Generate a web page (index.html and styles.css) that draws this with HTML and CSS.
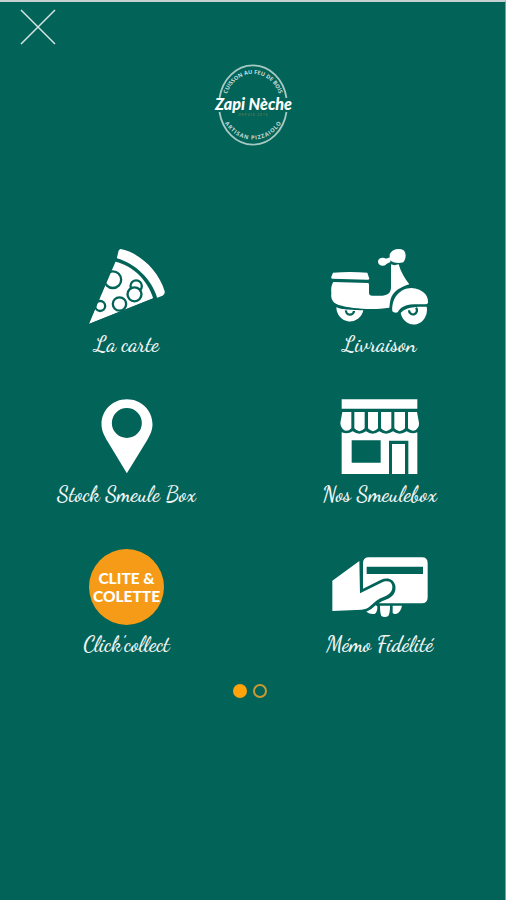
FILE: index.html
```
<!DOCTYPE html>
<html lang="fr">
	<head>
		<meta charset="utf-8">
		<title>Zapi Nèche</title>
		<link rel="stylesheet" href="styles.css">
	</head>
	<body>
		<div class="menu">
			<a class="close" href="javascript:;">
				<svg viewBox="0 0 36 36"><path d="M1 1L35 35M35 1L1 35"/></svg>
			</a>
			<div class="logo">
				<svg viewBox="0 0 84 84">
					<defs>
						<path id="arc-top" d="M14 42A28 31 0 0 1 70 42"/>
						<path id="arc-bottom" d="M9 42A33 34.5 0 0 0 75 42"/>
					</defs>
					<path class="ring" d="M8.5 35A34 39.3 0 0 1 75.5 35M8.5 49A34 39.3 0 0 0 75.5 49"/>
					<text class="around"><textPath href="#arc-top" startOffset="50%" text-anchor="middle" textLength="70">CUISSON AU FEU DE BOIS</textPath></text>
					<text class="around"><textPath href="#arc-bottom" startOffset="50%" text-anchor="middle" textLength="68">ARTISAN PIZZAIOLO</textPath></text>
					<text class="brand" x="4" y="47" textLength="77" lengthAdjust="spacingAndGlyphs">Zapi Nèche</text>
					<text class="since" x="42" y="52.5" text-anchor="middle" textLength="29">DEPUIS 2015</text>
				</svg>
			</div>
			<ul class="list">
				<li><a href="javascript:;">
					<svg class="icon" viewBox="4.5 27 300 228">
						<path d="M135 27C193 38 250 93 268 155Q268 164 261 167L245 173C228 117 180 71 124 55L129 33Q131 28 135 27Z"/>
						<path d="M120 65C171 77 216 119 233 175L40 252Z"/>
						<g class="cut">
							<circle cx="112" cy="119" r="25"/>
							<circle cx="182" cy="138" r="17"/>
							<circle class="solid" cx="177" cy="163" r="21"/>
							<circle cx="132" cy="192" r="20"/>
							<circle cx="74" cy="198" r="15"/>
						</g>
						<path class="hide" d="M118 60L40 252L26 246L94 62ZM40 252L236 174L238 186L46 266Z"/>
					</svg>
					<span>La carte</span>
				</a></li>
				<li><a href="javascript:;">
					<svg class="icon" viewBox="30 27 300 228">
						<path d="M39 98Q90 94 142 98L148 116Q148 119 143 119L37 116Q32 116 34 110Z"/>
						<path d="M40 126L144 129Q147 130 147 134V158Q147 167 157 167H188C205 166 213 157 213 142V73Q222 78 236 73C243 97 254 116 268 133C243 140 219 154 212 177Q209 190 208 203C158 211 93 206 56 195C37 188 32 177 34 159Q32 137 40 126Z"/>
						<path d="M209 43C216 27 237 23 251 31C260 41 258 57 250 67C235 72 218 68 209 60Z"/>
						<ellipse cx="188" cy="65" rx="14" ry="12"/>
						<path d="M197 56L211 52V66L199 72Z"/>
						<path d="M217 214C214 173 240 145 274 144C307 147 326 164 324 188Q323 193 315 193H281C254 193 240 204 233 217Q224 221 217 214Z"/>
						<path d="M49 202C64 208 76 209 130 211A41 43 0 0 1 49 202Z"/>
						<path d="M242 219C252 207 267 199 320 200A39 43 0 0 1 242 219Z"/>
						<path class="hub" d="M78 211A12 12 0 0 0 102 213M267 211A12 12 0 1 0 288 203"/>
					</svg>
					<span>Livraison</span>
				</a></li>
				<li><a href="javascript:;">
					<svg class="icon" viewBox="94.5 27 300 228">
						<path fill-rule="evenodd" d="M244 28C201 28 168 61 168 103C168 122 176 137 186 154L244 250L303 154C313 137 321 122 321 103C321 61 287 28 244 28ZM244 54A45 45 0 1 1 244 144A45 45 0 1 1 244 54Z"/>
					</svg>
					<span>Stock Smeule Box</span>
				</a></li>
				<li><a href="javascript:;">
					<svg class="icon" viewBox="59 27 300 228">
						<path d="M94 28H321V56H94Z"/>
						<path d="M96 66H123V115Q110 129 97 117Q90 110 90 99ZM132 66H163V115Q147 132 132 115ZM173 66H203V115Q188 132 173 115ZM212 66H243V115Q227 132 212 115ZM252 66H284V115Q268 132 252 115ZM293 66H320L326 99Q327 112 317 119Q306 127 293 115Z"/>
						<path fill-rule="evenodd" d="M94 127Q112 134 127 124Q147 138 167 124Q187 138 207 124Q227 138 248 124Q268 138 289 124Q304 134 321 127V252H294V152H236V252H94ZM124 151V218H211V151Z"/>
						<path d="M245 162H284V252H245Z"/>
					</svg>
					<span>Nos Smeulebox</span>
				</a></li>
				<li><a href="javascript:;">
					<div class="badge"><b>CLITE &amp;</b><b>COLETTE</b></div>
					<span>Click'collect</span>
				</a></li>
				<li><a href="javascript:;">
					<svg class="icon" viewBox="44 27 300 228">
						<path fill-rule="evenodd" d="M161 52H320Q337 52 337 69V172Q337 190 319 190H190Q199 182 211 179C232 172 243 157 240 137C235 116 216 111 197 119L143 146V69Q143 52 161 52ZM154 80V102H323V80Z"/>
						<path d="M132 63L134 160L198 128C217 119 230 125 231 139C232 155 221 165 206 170C188 176 177 187 164 199Q153 209 139 209L51 213V122Z"/>
						<path d="M153 215Q169 209 181 196L186 199Q187 216 178 222Q163 224 153 215ZM194 197H224Q224 222 218 229Q207 234 198 228Q194 219 194 197ZM232 197H260Q256 216 244 221Q237 224 232 219Z"/>
					</svg>
					<span>Mémo Fidélité</span>
				</a></li>
			</ul>
			<div class="dots">
				<i class="on"></i>
				<i></i>
			</div>
		</div>
	</body>
</html>
```
FILE: styles.css
```
*{
	margin: 0;
	padding: 0;
	box-sizing: border-box;
	list-style: none;
	text-decoration: none;
}
.menu{
	height: 900px;
	padding-top: 7px;
	background: #026359;
	border-top: 2px solid #c5d0d0;
	border-right: 1px solid #71a69e;
	overflow: hidden;
}
.close{
	display: block;
	width: 36px;
	height: 36px;
	margin-left: 20px;
}
.close svg{
	display: block;
	fill: none;
	stroke: #d5e5e1;
	stroke-width: 1.5;
}
.logo{
	width: 84px;
	height: 84px;
	margin: 18px auto 0;
}
.logo svg{
	display: block;
	fill: #fff;
}
.ring{
	fill: none;
	stroke: #a5c8c2;
	stroke-width: 1.8;
}
.around{
	font: bold 5.6px "Open Sans", sans-serif;
	fill: #c5dcd8;
}
.brand{
	font: italic 900 16px Lato, sans-serif;
}
.since{
	font: 3.5px "Open Sans", sans-serif;
	fill: #8b8a4d;
}
.list{
	display: grid;
	grid-template-columns: 253px 253px;
	grid-auto-rows: 150px;
	margin-top: 102px;
}
.list a{
	display: flex;
	flex-direction: column;
	align-items: center;
	color: #f0f5f4;
}
.icon{
	width: 100px;
	height: 76px;
	fill: #fff;
}
.list span{
	margin-top: 5px;
	font: 600 21.3px/28px "Dancing Script", "Liberation Serif", serif;
	white-space: nowrap;
}
.cut circle{
	fill: none;
	stroke: #026359;
	stroke-width: 7;
}
.cut .solid{
	fill: #fff;
}
.hide{
	fill: #026359;
}
.hub{
	fill: none;
	stroke: #026359;
	stroke-width: 7;
}
.badge{
	display: flex;
	flex-direction: column;
	align-items: center;
	justify-content: center;
	width: 75px;
	height: 76px;
	padding-bottom: 1px;
	border-radius: 50%;
	background: #f59b18;
}
.badge b{
	font: 900 15.5px/18px Lato, sans-serif;
	color: #fff;
}
.dots{
	display: flex;
	justify-content: center;
	gap: 6px;
	margin-top: -15px;
	padding-right: 6px;
}
.dots i{
	width: 14px;
	height: 14px;
	border: 2px solid #c99a32;
	border-radius: 50%;
}
.dots .on{
	background: #ffa30c;
	border-color: #ffa30c;
}
```
